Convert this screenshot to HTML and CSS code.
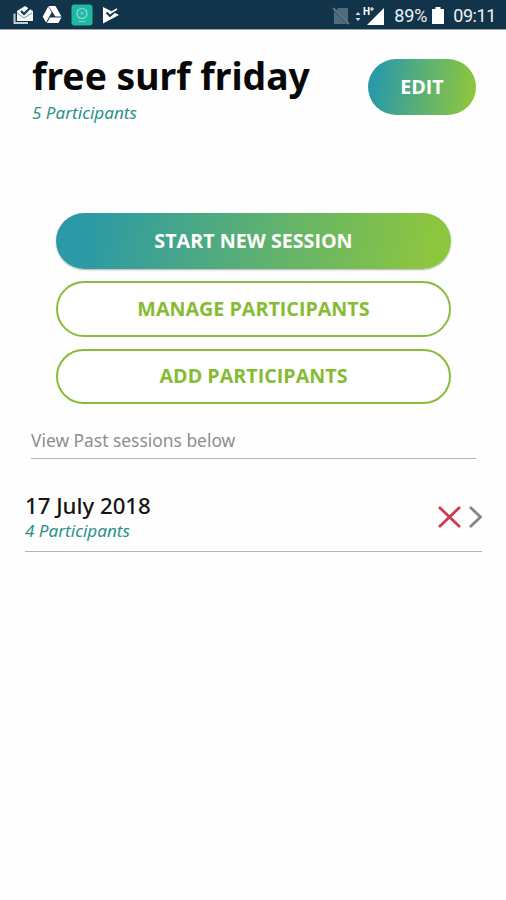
FILE: index.html
```html
<!doctype html>
<html lang="en">
<head>
  <title>free surf friday</title>
  <meta charset="utf-8" />
  <meta name="viewport" content="width=device-width,initial-scale=1" />

  <link rel="stylesheet" href="styles.css">
</head>
<body>
  <div class="status-bar">
    <div class="notifications">
      <svg width="20" height="20" viewBox="0 0 20 20">
        <path d="M1.500 8.500V18H15" fill="none" stroke="#c3ccd1" stroke-width="2" />
        <path d="M4 6l8-5 8 5v10H4z" fill="#f4f6f7" />
        <path d="M4 8l7 5 8-5" fill="none" stroke="#8497a2" />
        <path d="M8 6l3 3 6-6" fill="none" stroke="#12344a" stroke-width="2" />
      </svg>
      <svg width="20" height="20" viewBox="0 0 20 20">
        <path d="M6.500 1h7l6 10.500h-6.200z" fill="#fff" />
        <path d="M6.200 1.500L9.700 7.300 4 17.500 .7 11.800z" fill="#fff" />
        <path d="M8 12.500h11.500L16.300 18H4.800z" fill="#fff" />
      </svg>
      <svg width="22" height="22" viewBox="0 0 22 22">
        <rect x=".5" y=".5" width="21" height="21" rx="3" fill="#1fb8a3" />
        <circle cx="11" cy="9.500" r="5" fill="none" stroke="#8fddd1" stroke-width="1.200" />
        <path d="M11 7v3M9 8.500l2 2 2-2M7.500 17.500h7" fill="none" stroke="#80d7ca" />
      </svg>
      <svg width="18" height="18" viewBox="0 0 18 18">
        <path d="M1 1l7 3.500 9 4.500L1 17.500z" fill="#fff" />
        <path d="M4.500 6.500l3.500 3.500L17 2" fill="none" stroke="#12344a" stroke-width="2" />
        <path d="M10 6l5-3" fill="none" stroke="#fff" stroke-width="1.500" />
      </svg>
    </div>

    <div class="system">
      <svg class="no-sim" width="18" height="18" viewBox="0 0 18 18">
        <path d="M6 1h10v14L4.500 3zM2 4l13 13H2z" fill="#526b7b" />
        <path d="M1 1l16 16" stroke="#617988" stroke-width="1.800" />
      </svg>
      <svg class="signal" width="30" height="20" viewBox="0 0 30 20">
        <path d="M.5 9L3 6l2.500 3zM.5 12L3 15l2.500-3z" fill="#d5dde1" />
        <path d="M29 2v17H12z" fill="#fff" />
        <text class="network" x="8" y="9">H</text>
        <path d="M17 1v4M15 3h4" stroke="#fff" />
      </svg>
      <span class="percent">89%</span>
      <svg class="battery" width="12" height="17" viewBox="0 0 12 17">
        <path d="M3.500 0h5v2H12v15H0V2h3.500z" fill="#fff" />
      </svg>
      <span class="clock">09:11</span>
    </div>
  </div>

  <main>
    <header>
      <div>
        <h1>free surf friday</h1>
        <p class="count">5 Participants</p>
      </div>
      <button class="button filled edit">EDIT</button>
    </header>

    <div class="actions">
      <button class="button filled start">START NEW SESSION</button>
      <button class="button outlined">MANAGE PARTICIPANTS</button>
      <button class="button outlined">ADD PARTICIPANTS</button>
    </div>

    <p class="hint">View Past sessions below</p>

    <div class="session">
      <div>
        <h2>17 July 2018</h2>
        <p class="count">4 Participants</p>
      </div>
      <svg width="46" height="24" viewBox="0 0 46 24">
        <path d="M3 2l21 20M24 2L3 22" stroke="#ca3c50" stroke-width="2.800" />
        <path d="M34 2l10.500 10L34 22" fill="none" stroke="#858585" stroke-width="2.800" />
      </svg>
    </div>
  </main>
</body>
</html>
```
FILE: styles.css
```css
* {
  box-sizing: border-box;
}

html,
body {
  font-family: "Noto Sans", "Open Sans", sans-serif;
  margin: 0;
  padding: 0;
  height: 100%;
}

body {
  background: #fefefe;
  overflow: hidden;
}

h1, h2, p {
  margin: 0;
}

svg {
  display: block;
  flex: none;
}

.status-bar {
  display: flex;
  justify-content: space-between;
  height: 30px;
  padding: 0 10px 0 13px;
  background: #12344a;
  border-bottom: 1px solid #9aa6ad;
}

.notifications,
.system {
  display: flex;
  align-items: center;
}

.notifications {
  gap: 9px;
}

.system {
  color: #eef2f4;
  font-family: Roboto, sans-serif;
  font-size: 18px;
  line-height: 30px;
  padding-top: 2px;
}

.no-sim {
  margin-right: 5px;
}

.signal {
  margin-right: 9px;
}

.network {
  fill: #fff;
  font-size: 10px;
  font-weight: 700;
}

.percent {
  letter-spacing: -0.2px;
}

.battery {
  margin: 0 9px 0 5px;
}

.clock {
  letter-spacing: -0.4px;
}

main {
  padding: 28px 24px 0 25px;
}

header {
  display: flex;
  justify-content: space-between;
  height: 155px;
  padding: 0 6px 0 7px;
}

h1 {
  color: #080808;
  font-size: 37.3px;
  font-weight: 700;
  line-height: 38px;
  margin-top: -1px;
  white-space: nowrap;
}

.count {
  color: #2a928b;
  font-size: 17.1px;
  font-style: italic;
  line-height: 24px;
}

header .count {
  margin-top: 6px;
}

.button {
  display: block;
  height: 56px;
  padding: 0 0 1px;
  border: 0;
  border-radius: 28px;
  font-family: "Open Sans", sans-serif;
  font-size: 19.7px;
  font-weight: 700;
  white-space: nowrap;
}

.filled {
  background: linear-gradient(98deg, #2b9aa6 8%, #8cc63f 94%);
  color: #fff;
}

.outlined {
  background: #fff;
  border: 2px solid #8abb3c;
  color: #86bc34;
}

.edit {
  width: 108px;
  margin-top: 1px;
}

.actions {
  display: flex;
  flex-direction: column;
  gap: 12px;
  padding: 0 0 0 31px;
}

.actions .button {
  width: 395px;
  flex: none;
}

.actions .outlined {
  height: 55.5px;
}

.start {
  box-shadow: 0 1px 2px rgba(0, 0, 0, 0.3);
}

.hint {
  margin: 24px 6px 0 6px;
  height: 31px;
  border-bottom: 1px solid #b4b4b4;
  color: #8e8e8e;
  font-size: 17.4px;
  line-height: 24px;
}

.session {
  display: flex;
  align-items: center;
  justify-content: space-between;
  height: 93px;
  padding-top: 25px;
  border-bottom: 1px solid #b4b4b4;
}

.session svg {
  margin-bottom: 2px;
}

h2 {
  color: #151515;
  font-size: 22.2px;
  font-weight: 500;
  line-height: 27px;
}
```
